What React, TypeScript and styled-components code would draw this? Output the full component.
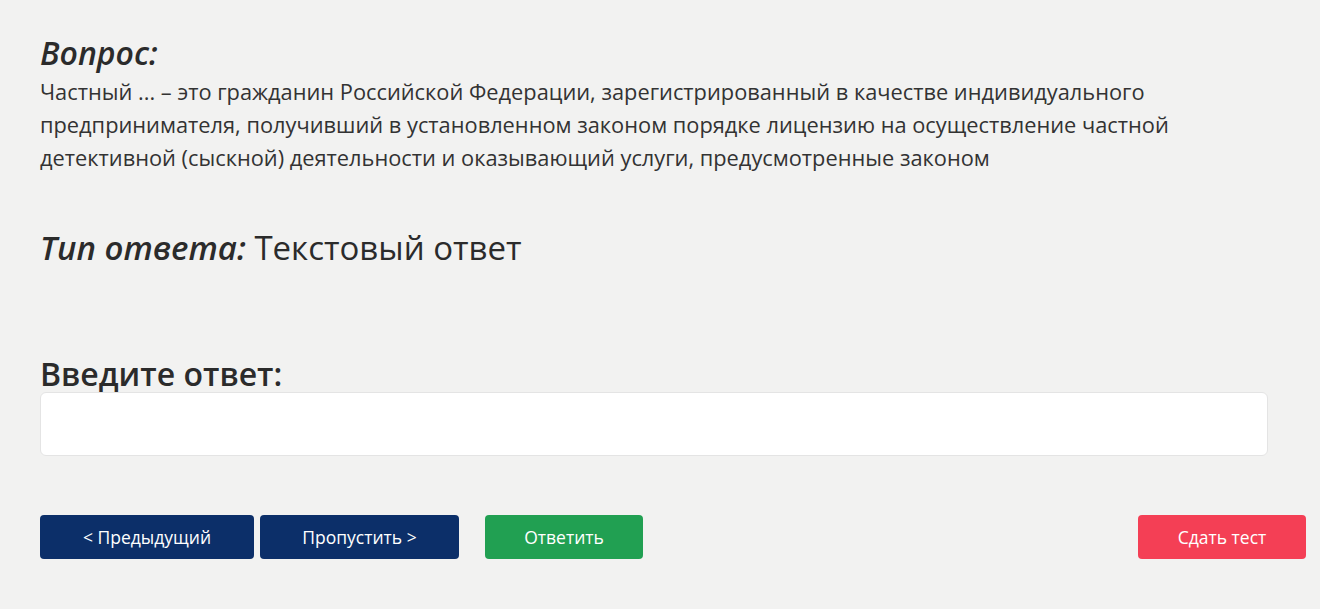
import styled, { createGlobalStyle } from "styled-components";

const Global = createGlobalStyle`
  body {
    margin: 0;
    background: #f2f2f1;
    font-family: "Open Sans", "Noto Sans", sans-serif;
    color: #2b2b2b;
  }
`;

const Page = styled.div`
  padding: 32px 14px 40px 40px;
  display: flex;
  flex-direction: column;
`;

const Heading = styled.h2`
  margin: 0;
  font-size: 32px;
  font-weight: 600;
  font-style: italic;
  line-height: 42px;
`;

const QuestionText = styled.p`
  margin: 1px 0 0;
  max-width: 1180px;
  font-size: 21.8px;
  line-height: 33px;
  color: #333;
`;

const TypeRow = styled.div`
  margin-top: 52px;
  font-size: 33px;
  line-height: 44px;
  span {
    font-weight: 600;
    font-style: italic;
  }
`;

const AnswerLabel = styled.label`
  margin-top: 86px;
  font-size: 32px;
  font-weight: 600;
  line-height: 36px;
`;

const AnswerInput = styled.input`
  width: 1228px;
  height: 64px;
  box-sizing: border-box;
  border: 1px solid #e4e4e4;
  border-radius: 6px;
  background: #fff;
  outline: none;
  padding: 0 16px;
  font: inherit;
  font-size: 20px;
`;

const Actions = styled.div`
  margin-top: 59px;
  display: flex;
  align-items: center;
  gap: 6px;
`;

const Button = styled.button<{ $tone: "navy" | "green" | "red"; $w: number }>`
  width: ${(p) => p.$w}px;
  height: 44px;
  border: none;
  border-radius: 4px;
  color: #fff;
  font-family: inherit;
  font-size: 17.5px;
  cursor: pointer;
  background: ${(p) =>
    p.$tone === "navy" ? "#0c2f69" : p.$tone === "green" ? "#21a052" : "#f43f55"};
`;

const Spacer = styled.div`
  flex: 1;
`;

export default function App() {
  return (
    <Page>
      <Global />
      <Heading>Вопрос:</Heading>
      <QuestionText>
        Частный ... – это гражданин Российской Федерации, зарегистрированный в качестве
        индивидуального предпринимателя, получивший в установленном законом порядке
        лицензию на осуществление частной детективной (сыскной) деятельности и
        оказывающий услуги, предусмотренные законом
      </QuestionText>
      <TypeRow>
        <span>Тип ответа:</span> Текстовый ответ
      </TypeRow>
      <AnswerLabel htmlFor="answer">Введите ответ:</AnswerLabel>
      <AnswerInput id="answer" />
      <Actions>
        <Button $tone="navy" $w={214}>&lt; Предыдущий</Button>
        <Button $tone="navy" $w={199}>Пропустить &gt;</Button>
        <Button $tone="green" $w={158} style={{ marginLeft: 20 }}>Ответить</Button>
        <Spacer />
        <Button $tone="red" $w={168}>Сдать тест</Button>
      </Actions>
    </Page>
  );
}
